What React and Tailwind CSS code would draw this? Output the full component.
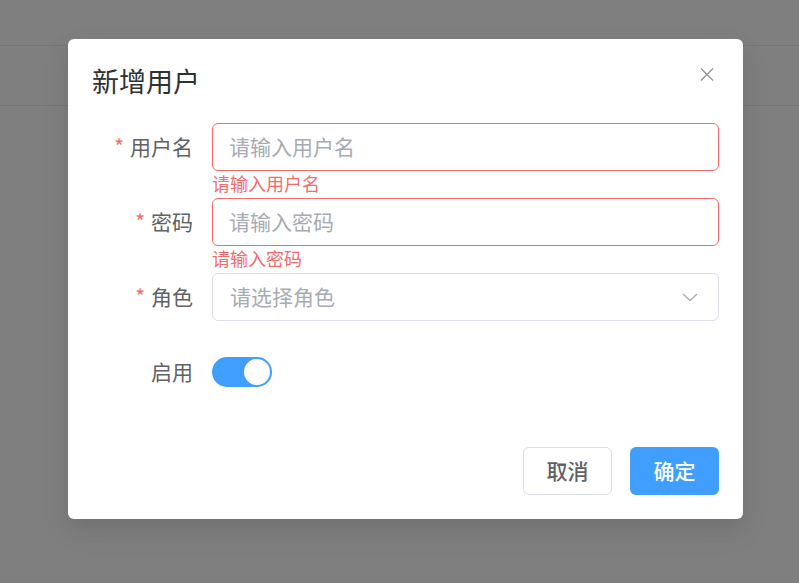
import React, { useState } from 'react';

const font = { fontFamily: '"Noto Sans CJK SC", "Noto Sans", sans-serif' };

const Label = ({ text, required }) => (
  <div className="w-[120px] shrink-0 pr-[19px] h-[48px] flex items-center justify-end text-[21px] text-[#606266]">
    {required && <span className="text-[#f56c6c] mr-[6px]">*</span>}
    {text}
  </div>
);

const ErrorText = ({ text }) => (
  <div className="h-[27px] pt-[3px] text-[18px] leading-[18px] text-[#f56c6c]">{text}</div>
);

const FormRow = ({ label, required, error, children }) => (
  <div className="flex">
    <Label text={label} required={required} />
    <div className="flex-1 flex flex-col">
      {children}
      <ErrorText text={error} />
    </div>
  </div>
);

const TextInput = ({ placeholder, invalid }) => (
  <div
    className={`h-[48px] rounded-[6px] border flex items-center pl-[16px] text-[21px] text-[#a8abb2] ${
      invalid ? 'border-[#f56c6c]' : 'border-[#dcdfe6]'
    }`}
  >
    {placeholder}
  </div>
);

export default function App() {
  const [enabled, setEnabled] = useState(true);

  return (
    <div className="relative w-[799px] h-[583px] overflow-hidden bg-white" style={font}>
      {/* page behind the mask */}
      <div className="h-[46px] border-b border-[#ebeef5]" />
      <div className="h-[60px] border-b border-[#ebeef5]" />

      {/* mask */}
      <div className="absolute inset-0 bg-black/50">
        <div className="ml-[68px] mt-[39px] w-[675px] h-[480px] bg-white rounded-[6px] p-[24px] flex flex-col shadow-[0_12px_32px_4px_rgba(0,0,0,0.04),0_8px_20px_rgba(0,0,0,0.08)]">
          {/* header */}
          <div className="flex items-start justify-between pb-[24px]">
            <div className="h-[36px] leading-[36px] text-[27px] text-[#303133]">新增用户</div>
            <button className="mt-[4px] mr-[5px] w-[14px] h-[14px] flex items-center justify-center">
              <svg width="15" height="15" viewBox="0 0 15 15" fill="none" stroke="#909399" strokeWidth="1.4">
                <path d="M1 1L14 14M14 1L1 14" />
              </svg>
            </button>
          </div>

          {/* form */}
          <div className="flex flex-col">
            <FormRow label="用户名" required error="请输入用户名">
              <TextInput placeholder="请输入用户名" invalid />
            </FormRow>
            <FormRow label="密码" required error="请输入密码">
              <TextInput placeholder="请输入密码" invalid />
            </FormRow>
            <FormRow label="角色" required>
              <div className="h-[48px] rounded-[6px] border border-[#dcdfe6] flex items-center justify-between pl-[17px] pr-[19px] text-[21px] text-[#a8abb2]">
                <span>请选择角色</span>
                <svg width="18" height="18" viewBox="0 0 18 18" fill="none" stroke="#a8abb2" strokeWidth="1.3">
                  <path d="M2 6L9 12.5L16 6" />
                </svg>
              </div>
            </FormRow>
            <div className="flex">
              <Label text="启用" />
              <div className="flex-1 h-[48px] flex items-center">
                <button
                  onClick={() => setEnabled(!enabled)}
                  className={`w-[60px] h-[30px] rounded-full flex items-center px-[2px] ${
                    enabled ? 'bg-[#409eff] justify-end' : 'bg-[#dcdfe6] justify-start'
                  }`}
                >
                  <span className="w-[26px] h-[26px] rounded-full bg-white" />
                </button>
              </div>
            </div>
          </div>

          {/* footer */}
          <div className="mt-auto flex justify-end gap-[18px]">
            <button className="w-[89px] h-[48px] rounded-[6px] border border-[#dcdfe6] bg-white text-[21px] font-[500] text-[#606266]">
              取消
            </button>
            <button className="w-[89px] h-[48px] rounded-[6px] bg-[#409eff] text-[21px] font-[500] text-white">
              确定
            </button>
          </div>
        </div>
      </div>
    </div>
  );
}
